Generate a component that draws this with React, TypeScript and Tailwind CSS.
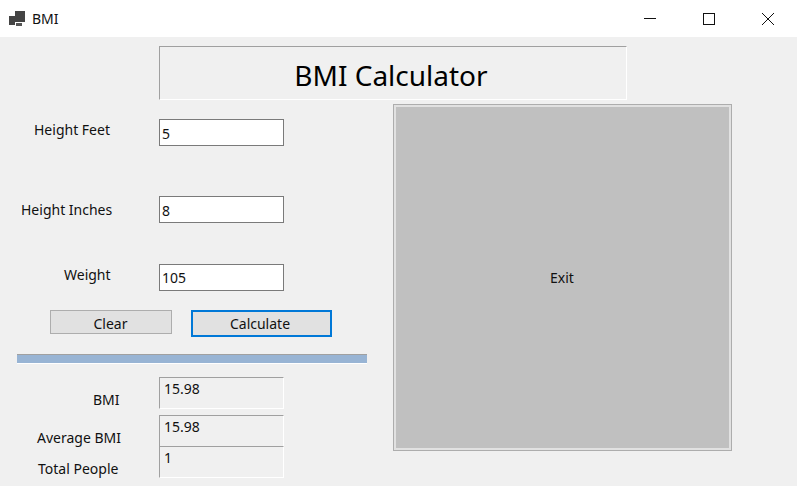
const font = "font-['Noto_Sans','Open_Sans',sans-serif]";

function Field({ label, value, labelClass, rowClass, valueClass }: { label: string; value: string; labelClass: string; rowClass: string; valueClass?: string }) {
  return (
    <div className={`flex items-start ${rowClass}`}>
      <span className={`text-[14px] leading-[20px] text-[#111] text-right ${labelClass}`}>{label}</span>
      <div className={`ml-auto mr-[109px] w-[125px] h-[27px] bg-white border border-[#7a7a7a] pl-[2px] text-[14px] text-[#111] ${valueClass ?? "leading-[28px]"}`}>
        {value}
      </div>
    </div>
  );
}

function Output({ value, className }: { value: string; className?: string }) {
  return (
    <div className={`w-[125px] h-[32px] border-t border-l border-t-[#a0a0a0] border-l-[#a0a0a0] border-r border-b border-r-white border-b-white pl-[4px] pt-[1px] text-[14px] leading-[20px] text-[#111] ${className ?? ""}`}>
      {value}
    </div>
  );
}

export default function App() {
  return (
    <div className={`w-[797px] h-[486px] overflow-hidden bg-[#f0f0f0] ${font}`}>
      <div className="h-[37px] bg-white flex items-center">
        <svg width="18" height="16" viewBox="0 0 18 16" className="ml-[8px] mr-[6px]" aria-hidden>
          <rect x="1" y="5" width="6" height="9" fill="#444" />
          <rect x="7" y="0" width="10" height="11" fill="#444" />
          <rect x="8" y="12" width="6" height="3" fill="#555" />
        </svg>
        <span className="text-[14px] text-[#111]">BMI</span>
        <div className="ml-auto flex items-center">
          <svg width="58" height="36" viewBox="0 0 58 36" aria-hidden>
            <path d="M23 17.5H35" stroke="#111" strokeWidth="1" />
          </svg>
          <svg width="60" height="36" viewBox="0 0 60 36" aria-hidden>
            <rect x="24.5" y="12.5" width="11" height="11" fill="none" stroke="#111" strokeWidth="1" />
          </svg>
          <svg width="58" height="36" viewBox="0 0 58 36" aria-hidden>
            <path d="M23 12L35 24M35 12L23 24" stroke="#111" strokeWidth="1" />
          </svg>
        </div>
      </div>

      <div className="pt-[9px]">
        <div className="ml-[159px] w-[468px] h-[54px] pt-[3px] pr-[4px] border-t border-l border-t-[#a0a0a0] border-l-[#a0a0a0] border-r border-b border-r-white border-b-white flex items-center justify-center text-[28px] text-black">
          BMI Calculator
        </div>

        <div className="flex">
          <div className="w-[393px]">
            <Field label="Height Feet" value="5" rowClass="mt-[19px] h-[27px]" labelClass="ml-[34px] mt-[1px]" />
            <Field label="Height Inches" value="8" rowClass="mt-[50px] h-[27px]" labelClass="ml-[21px] mt-[4px]" />
            <Field label="Weight" value="105" rowClass="mt-[41px] h-[27px]" labelClass="ml-[64px] mt-[1px]" valueClass="leading-[26px]" />

            <div className="flex items-start mt-[19px] ml-[50px] gap-[19px]">
              <button className="w-[122px] h-[24px] pt-[3px] pr-[1px] bg-[#e1e1e1] border border-[#adadad] text-[14px] leading-[20px] text-[#111]">
                Clear
              </button>
              <button className="w-[141px] h-[27px] pr-[3px] bg-[#e1e1e1] border-2 border-[#0078d7] text-[14px] leading-[22px] text-[#111]">
                Calculate
              </button>
            </div>

            <div className="mt-[17px] ml-[17px] w-[350px] h-[10px] bg-[#98b4d4] border-t border-t-[#a0a0a0] border-b border-b-white" />

            <div className="mt-[13px] flex">
              <div className="w-[159px] text-[14px] leading-[20px] text-[#111]">
                <div className="pt-[13px] pl-[93px]">BMI</div>
                <div className="pt-[18px] pl-[37px]">Average BMI</div>
                <div className="pt-[11px] pl-[38px]">Total People</div>
              </div>
              <div>
                <Output value="15.98" />
                <Output value="15.98" className="mt-[6px]" />
                <Output value="1" className="-mt-px" />
              </div>
            </div>
          </div>

          <button className="mt-[4px] w-[339px] h-[347px] pb-[1px] pr-[1px] bg-[#c0c0c0] border-[3px] border-[#e1e1e1] outline outline-1 -outline-offset-1 outline-[#adadad] text-[14px] text-[#111]">
            Exit
          </button>
        </div>
      </div>
    </div>
  );
}
